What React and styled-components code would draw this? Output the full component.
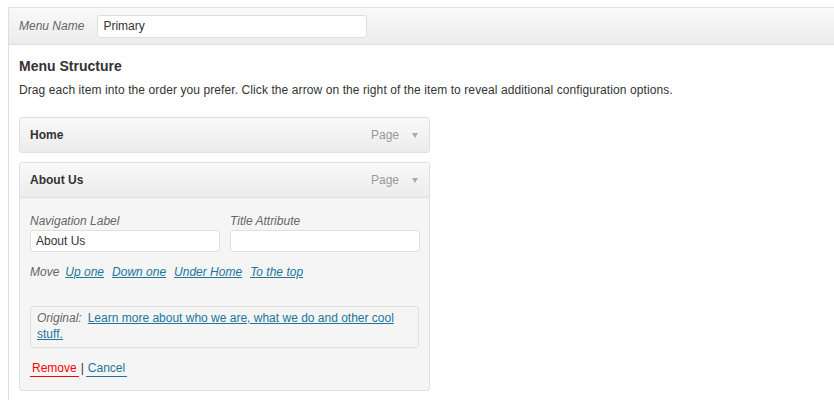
import React from "react";
import styled, { createGlobalStyle } from "styled-components";

const Global = createGlobalStyle`
  html, body { margin: 0; padding: 0; background: #fff; }
  body { font-family: "Liberation Sans", Arial, sans-serif; font-size: 12px; color: #333; }
  * { box-sizing: border-box; }
`;

const Panel = styled.div`
  margin: 7px 0 0 8px;
  border-left: 1px solid #dfdfdf;
  border-top: 1px solid #dfdfdf;
  min-height: 393px;
`;

const Header = styled.div`
  display: flex;
  align-items: center;
  height: 37px;
  padding: 0 10px;
  background: linear-gradient(to bottom, #f9f9f9, #ececec);
  border-bottom: 1px solid #dfdfdf;
`;

const NameLabel = styled.label`
  font-style: italic;
  color: #666;
  font-size: 12px;
  margin-right: 13px;
`;

const TextInput = styled.input`
  font-family: "Liberation Sans", Arial, sans-serif;
  font-size: 12px;
  color: #333;
  height: ${(p) => p.$h || 22}px;
  width: ${(p) => p.$w}px;
  border: 1px solid #dfdfdf;
  border-radius: 3px;
  background: #fff;
  padding: 0 5px;
  outline: none;
`;

const Body = styled.div`
  padding: 13px 10px 0 10px;
`;

const Title = styled.h3`
  margin: 0;
  font-size: 14px;
  line-height: 17px;
  font-weight: bold;
  color: #333;
`;

const Desc = styled.p`
  margin: 8px 0 0;
  font-size: 12px;
  line-height: 15px;
  letter-spacing: 0.09px;
  color: #333;
`;

const List = styled.div`
  margin-top: 19px;
  width: 411px;
  display: flex;
  flex-direction: column;
  gap: 9px;
`;

const Item = styled.div`
  border: 1px solid #dfdfdf;
  border-radius: 3px;
  background: #f5f5f5;
  overflow: hidden;
`;

const ItemHead = styled.div`
  display: flex;
  align-items: center;
  height: ${(p) => (p.$open ? 35 : 34)}px;
  padding: 0 11px 0 10px;
  background: linear-gradient(to bottom, #f9f9f9, #ececec);
  border-bottom: ${(p) => (p.$open ? "1px solid #dfdfdf" : "none")};
`;

const ItemTitle = styled.span`
  flex: 1;
  font-weight: bold;
  font-size: 12px;
  color: #333;
`;

const ItemType = styled.span`
  color: #999;
  font-size: 12px;
  margin-right: 13px;
`;

const Arrow = () => (
  <svg width="6" height="5" viewBox="0 0 6 5" style={{ display: "block" }}>
    <path d="M0 0 L6 0 L3 5 Z" fill="#aaa" />
  </svg>
);

const ItemBody = styled.div`
  padding: 16px 10px 13px 10px;
`;

const FieldRow = styled.div`
  display: flex;
  gap: 10px;
`;

const Field = styled.div`
  display: flex;
  flex-direction: column;
  gap: 1px;
`;

const FieldLabel = styled.label`
  font-style: italic;
  color: #666;
  font-size: 12px;
  line-height: 15px;
`;

const MoveRow = styled.div`
  margin-top: 13px;
  font-style: italic;
  line-height: 15px;
  color: #666;
  display: flex;
  gap: 8px;
`;

const MoveLabel = styled.span`
  margin-right: -2px;
`;

const Link = styled.a`
  color: #21759b;
  text-decoration: underline;
  cursor: pointer;
`;

const Original = styled.div`
  margin-top: 26px;
  border: 1px solid #dfdfdf;
  border-radius: 3px;
  padding: 3px 6px 5px 6px;
  line-height: 16px;
  color: #333;
`;

const OrigLabel = styled.span`
  font-style: italic;
  color: #666;
  margin-right: 6px;
`;

const Actions = styled.div`
  margin-top: 13px;
  display: flex;
  align-items: flex-start;
  line-height: 15px;
  color: #333;
`;

const ActionLink = styled.a`
  display: inline-block;
  padding: 0 2px;
  color: ${(p) => p.$color};
  border-bottom: 1px solid ${(p) => p.$color};
  text-decoration: none;
  cursor: pointer;
`;

const Sep = styled.span`
  margin: 0 2px;
`;

export default function App() {
  return (
    <>
      <Global />
      <Panel>
        <Header>
          <NameLabel>Menu Name</NameLabel>
          <TextInput $w={270} $h={23} defaultValue="Primary" />
        </Header>
        <Body>
          <Title>Menu Structure</Title>
          <Desc>
            Drag each item into the order you prefer. Click the arrow on the right of the item to reveal additional configuration options.
          </Desc>
          <List>
            <Item>
              <ItemHead>
                <ItemTitle>Home</ItemTitle>
                <ItemType>Page</ItemType>
                <Arrow />
              </ItemHead>
            </Item>
            <Item>
              <ItemHead $open>
                <ItemTitle>About Us</ItemTitle>
                <ItemType>Page</ItemType>
                <Arrow />
              </ItemHead>
              <ItemBody>
                <FieldRow>
                  <Field>
                    <FieldLabel>Navigation Label</FieldLabel>
                    <TextInput $w={190} defaultValue="About Us" />
                  </Field>
                  <Field>
                    <FieldLabel>Title Attribute</FieldLabel>
                    <TextInput $w={190} defaultValue="" />
                  </Field>
                </FieldRow>
                <MoveRow>
                  <MoveLabel>Move</MoveLabel>
                  <Link>Up one</Link>
                  <Link>Down one</Link>
                  <Link>Under Home</Link>
                  <Link>To the top</Link>
                </MoveRow>
                <Original>
                  <OrigLabel>Original:</OrigLabel>
                  <Link>Learn more about who we are, what we do and other cool stuff.</Link>
                </Original>
                <Actions>
                  <ActionLink $color="#f00">Remove</ActionLink>
                  <Sep>|</Sep>
                  <ActionLink $color="#21759b">Cancel</ActionLink>
                </Actions>
              </ItemBody>
            </Item>
          </List>
        </Body>
      </Panel>
    </>
  );
}
